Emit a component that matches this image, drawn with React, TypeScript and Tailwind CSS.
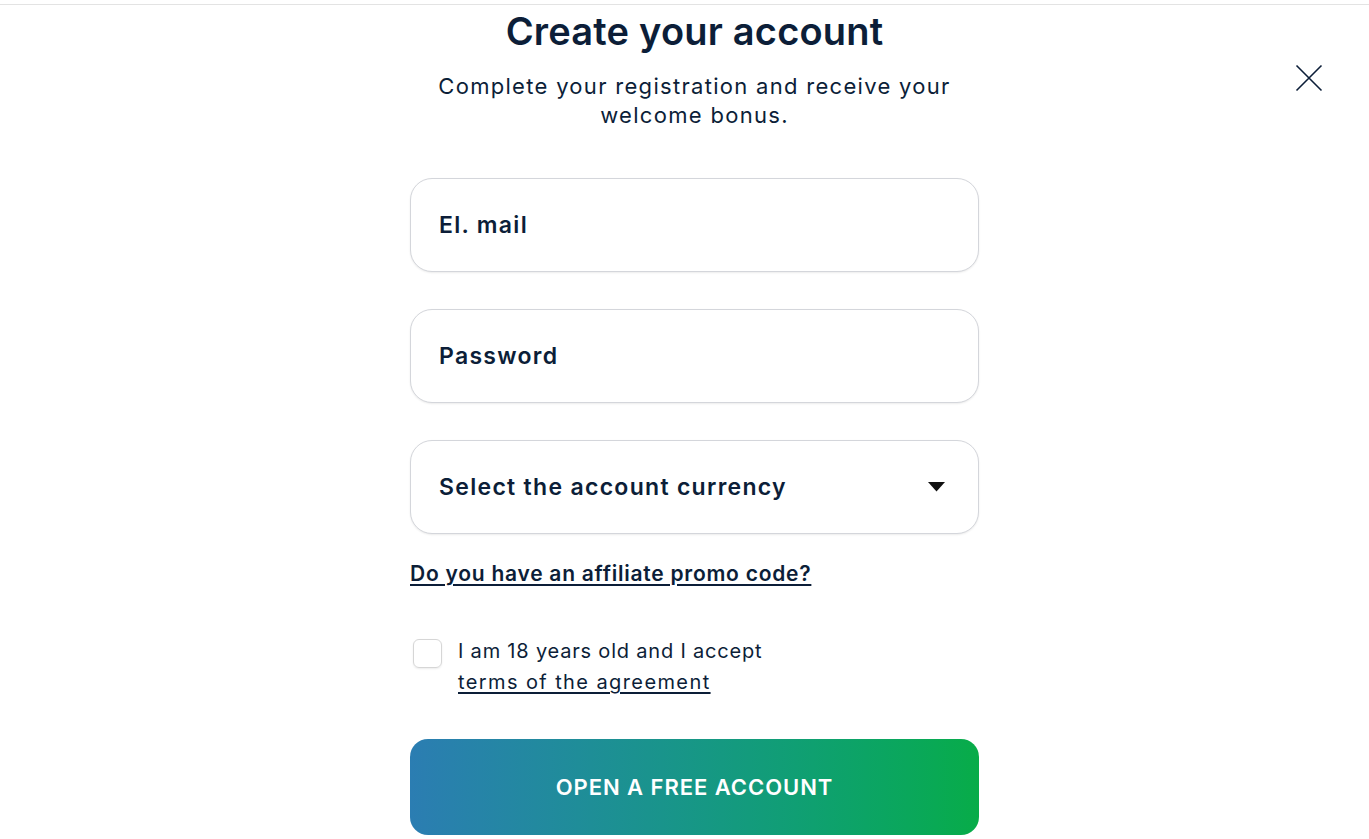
import React from "react";

const font = { fontFamily: 'Inter, "Noto Sans", sans-serif' };

function Field({ label, select }: { label: string; select?: boolean }) {
  return (
    <div className="flex h-[94px] w-full items-center justify-between rounded-[22px] border border-[#d4d6db] bg-white pl-[28px] pr-[33px] shadow-[0_1px_2px_rgba(0,0,0,0.08)]">
      <span className="text-[23px] font-semibold tracking-[1.3px] text-[#0c1e38]">{label}</span>
      {select && (
        <svg width="17" height="10" viewBox="0 0 17 10">
          <path d="M0 0 L17 0 L8.5 9.5 Z" fill="#111" />
        </svg>
      )}
    </div>
  );
}

export default function App() {
  return (
    <div className="relative min-h-[839px] w-full bg-white text-[#0c1e38]" style={font}>
      <div className="h-[4px]" />
      <div className="border-t border-[#e3e3e3]" />
      <button className="absolute left-[1295px] top-[64px] h-[28px] w-[28px]">
        <svg width="28" height="28" viewBox="0 0 28 28">
          <path d="M1.5 1.5 L26.5 26.5 M26.5 1.5 L1.5 26.5" stroke="#0c1e38" strokeWidth="1.6" fill="none" />
        </svg>
      </button>
      <div className="flex justify-center pl-[20px]">
        <div className="flex w-[569px] flex-col">
          <h1 className="mt-[6px] text-center text-[38px] font-semibold leading-[40px] tracking-[0.2px]">Create your account</h1>
          <p className="mx-auto mt-[21px] w-[569px] text-center text-[22px] leading-[29px] tracking-[1.3px]">
            Complete your registration and receive your
            <br />
            welcome bonus.
          </p>
          <div className="mt-[48px] flex flex-col gap-[37px]">
            <Field label="El. mail" />
            <Field label="Password" />
            <Field label="Select the account currency" select />
          </div>
          <a className="mt-[28px] self-start text-[21px] font-semibold leading-[24px] tracking-[0.75px] underline underline-offset-[3px]" href="#">
            Do you have an affiliate promo code?
          </a>
          <label className="mt-[50px] flex items-start gap-[16px] pl-[3px]">
            <span className="mt-[3px] h-[29px] w-[29px] shrink-0 rounded-[6px] border border-[#d6d6d6] shadow-[0_1px_2px_rgba(0,0,0,0.08)]" />
            <span className="text-[20px] leading-[31px] tracking-[0.8px]">
              I am 18 years old and I accept
              <br />
              <a href="#" className="tracking-[1.4px] underline underline-offset-[3px]">terms of the agreement</a>
            </span>
          </label>
          <button className="mt-[41px] h-[96px] w-full rounded-[18px] bg-gradient-to-r from-[#2b7db2] to-[#08ac48] text-[22px] font-semibold tracking-[0.95px] text-white">
            OPEN A FREE ACCOUNT
          </button>
        </div>
      </div>
    </div>
  );
}
